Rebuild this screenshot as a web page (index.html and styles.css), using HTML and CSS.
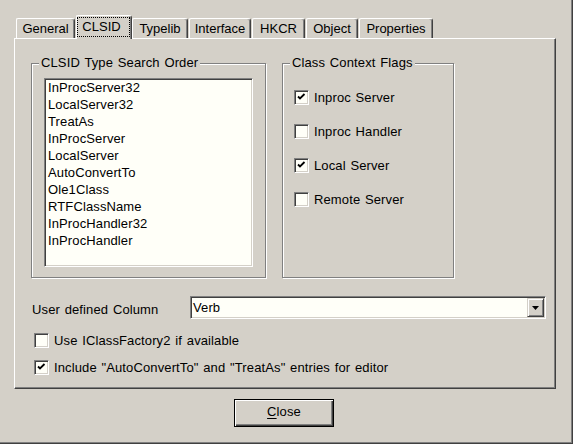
FILE: index.html
```html
<!DOCTYPE html>
<html>
<head>
<meta charset="utf-8">
<title>Options</title>
<link rel="stylesheet" href="styles.css">
</head>
<body>
<div class="window">
  <div class="tabs">
    <div class="tab w-general">General</div>
    <div class="tab tab-sel"><span class="focus">CLSID</span></div>
    <div class="tab w-typelib">Typelib</div>
    <div class="tab w-interface">Interface</div>
    <div class="tab w-hkcr">HKCR</div>
    <div class="tab w-object">Object</div>
    <div class="tab w-props">Properties</div>
  </div>
  <div class="panel">
    <div class="groups">
      <div class="group group-order">
        <div class="legend">CLSID Type Search Order</div>
        <div class="listbox">
          <div class="item">InProcServer32</div>
          <div class="item">LocalServer32</div>
          <div class="item">TreatAs</div>
          <div class="item">InProcServer</div>
          <div class="item">LocalServer</div>
          <div class="item">AutoConvertTo</div>
          <div class="item">Ole1Class</div>
          <div class="item">RTFClassName</div>
          <div class="item">InProcHandler32</div>
          <div class="item">InProcHandler</div>
        </div>
      </div>
      <div class="group group-flags">
        <div class="legend">Class Context Flags</div>
        <div class="flags">
          <div class="check"><span class="box"><svg class="mark" viewBox="0 0 11 11"><polyline points="2,4.5 4,6.5 8.5,2" /></svg></span>Inproc Server</div>
          <div class="check"><span class="box"></span>Inproc Handler</div>
          <div class="check"><span class="box"><svg class="mark" viewBox="0 0 11 11"><polyline points="2,4.5 4,6.5 8.5,2" /></svg></span>Local Server</div>
          <div class="check"><span class="box"></span>Remote Server</div>
        </div>
      </div>
    </div>
    <div class="combo-row">
      <div class="combo-label">User defined Column</div>
      <div class="combo">
        <span class="combo-text">Verb</span>
        <span class="combo-btn"><svg class="arrow" viewBox="0 0 7 4"><polygon points="0,0 7,0 3.5,4" /></svg></span>
      </div>
    </div>
    <div class="options">
      <div class="check"><span class="box"></span>Use IClassFactory2 if available</div>
      <div class="check"><span class="box"><svg class="mark" viewBox="0 0 11 11"><polyline points="2,4.5 4,6.5 8.5,2" /></svg></span>Include "AutoConvertTo" and "TreatAs" entries for editor</div>
    </div>
  </div>
  <div class="footer">
    <button class="btn" type="button"><u>C</u>lose</button>
  </div>
</div>
</body>
</html>
```

FILE: styles.css
```css
html, body {
  margin: 0;
  padding: 0;
  background: #d4d0c8;
}

body {
  font-family: "Liberation Sans", Arial, sans-serif;
  font-size: 13px;
  letter-spacing: 0.12px;
  word-spacing: 1px;
  color: #000;
  overflow: hidden;
}

.window {
  width: 573px;
  height: 444px;
  box-sizing: border-box;
  padding: 15px 0 0 14px;
  box-shadow: inset -1px -1px #404040, inset -2px -2px #808080;
  overflow: hidden;
}

/* ---------- tabs ---------- */
.tabs {
  display: flex;
  align-items: flex-end;
  height: 23px;
  padding-left: 2px;
  position: relative;
  z-index: 1;
  letter-spacing: 0;
}

.tab {
  box-sizing: border-box;
  height: 20px;
  margin-right: 1px;
  border-top: 1px solid #fff;
  border-left: 1px solid #fff;
  border-right: 1px solid #404040;
  border-radius: 2px 3px 0 0;
  box-shadow: inset -1px 0 #808080;
  background: #d4d0c8;
  text-align: center;
  line-height: 19px;
  white-space: nowrap;
}

.w-general { width: 59px; }
.w-typelib { width: 56px; }
.w-interface { width: 62px; }
.w-hkcr { width: 53px; }
.w-object { width: 52px; }
.w-props { width: 74px; }

.tab-sel {
  width: 56px;
  height: 24px;
  margin-right: 0;
  margin-bottom: -1px;
  padding-top: 1px;
}

.focus {
  display: block;
  box-sizing: border-box;
  height: 20px;
  margin: 0 1px 0 0;
  border: 1px dotted #000;
  line-height: 18px;
  padding-right: 4px;
}

/* ---------- panel ---------- */
.panel {
  width: 542px;
  height: 351px;
  box-sizing: border-box;
  border: 1px solid;
  border-color: #fff #404040 #404040 #fff;
  box-shadow: inset -1px -1px #808080;
}

.groups {
  display: flex;
  gap: 16px;
  margin: 24px 0 0 16px;
}

.group {
  box-sizing: border-box;
  height: 215px;
  border: 1px solid #808080;
  box-shadow: inset 1px 1px #fff, 1px 1px #fff;
}

.group-order { width: 235px; }
.group-flags { width: 172px; }

.legend {
  width: fit-content;
  margin: -9px 0 0 7px;
  padding: 0 2px;
  line-height: 15px;
  background: #d4d0c8;
  white-space: nowrap;
}

.listbox {
  box-sizing: border-box;
  width: 209px;
  height: 189px;
  margin: 8px 0 0 12px;
  padding: 0 0 0 3px;
  border: 1px solid;
  border-color: #808080 #fff #fff #808080;
  box-shadow: inset 1px 1px #404040, inset -1px -1px #d4d0c8;
  background: #fffff8;
}

.item {
  line-height: 17px;
  white-space: nowrap;
}

/* ---------- checkboxes ---------- */
.flags {
  display: flex;
  flex-direction: column;
  gap: 17px;
  margin: 19px 0 0 11px;
}

.check {
  display: flex;
  align-items: center;
  gap: 5px;
  height: 17px;
  line-height: 17px;
  white-space: nowrap;
}

.box {
  flex: none;
  display: flex;
  align-items: center;
  justify-content: center;
  box-sizing: border-box;
  width: 15px;
  height: 15px;
  border: 1px solid;
  border-color: #808080 #fff #fff #808080;
  box-shadow: inset 1px 1px #404040, inset -1px -1px #d4d0c8;
  background: #fffff8;
}

.mark {
  width: 11px;
  height: 11px;
}

.mark polyline {
  fill: none;
  stroke: #000;
  stroke-width: 1.8;
}

/* ---------- combo ---------- */
.combo-row {
  display: flex;
  align-items: center;
  margin: 18px 0 0 17px;
}

.combo-label {
  width: 158px;
  padding-top: 4px;
  white-space: nowrap;
}

.combo {
  box-sizing: border-box;
  display: flex;
  align-items: stretch;
  width: 356px;
  height: 23px;
  border: 1px solid;
  border-color: #808080 #fff #fff #808080;
  box-shadow: inset 1px 1px #404040, inset -1px -1px #d4d0c8;
  background: #fffff8;
  padding: 1px;
}

.combo-text {
  flex: 1;
  padding-left: 1px;
  line-height: 19px;
}

.combo-btn {
  box-sizing: border-box;
  width: 17px;
  display: flex;
  align-items: center;
  justify-content: center;
  border: 1px solid;
  border-color: #d4d0c8 #404040 #404040 #d4d0c8;
  box-shadow: inset 1px 1px #fff, inset -1px -1px #808080;
  background: #d4d0c8;
}

.arrow {
  width: 7px;
  height: 4px;
}

.arrow polygon {
  fill: #000;
}

.options {
  display: flex;
  flex-direction: column;
  gap: 10px;
  margin: 13px 0 0 19px;
}

/* ---------- footer ---------- */
.footer {
  margin: 10px 0 0 220px;
}

.btn {
  display: block;
  box-sizing: border-box;
  width: 100px;
  height: 28px;
  padding: 0 0 2px 0;
  border: 1px solid #000;
  box-shadow: inset 1px 1px #fff, inset -1px -1px #404040, inset -2px -2px #808080;
  background: #d4d0c8;
  font-family: "Liberation Sans", Arial, sans-serif;
  font-size: 13px;
  letter-spacing: 0.12px;
  color: #000;
  line-height: 20px;
}

.btn u {
  text-decoration-thickness: 1px;
  text-underline-offset: 2px;
}
```
